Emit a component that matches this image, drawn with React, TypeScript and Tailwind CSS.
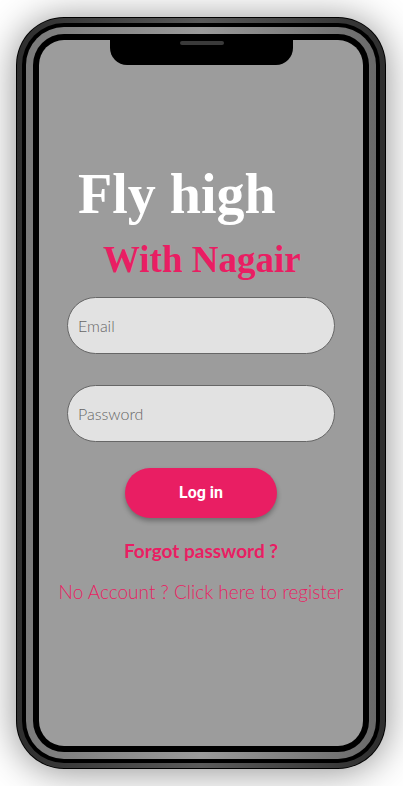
export default function App() {
  return (
    <div className="min-h-[786px] w-[403px] bg-white pl-[16px] pt-[17px]">
      {/* phone frame */}
      <div className="h-[752px] w-[370px] rounded-[48px] bg-black p-px shadow-[0_2px_38px_rgba(0,0,0,0.45)]">
        <div className="h-full w-full rounded-[47px] bg-gradient-to-r from-[#2e2e2e] via-[#5a5a5a] to-[#2e2e2e] p-[5px]">
          <div className="h-full w-full rounded-[42px] bg-black p-[4px]">
            <div className="h-full w-full rounded-[38px] bg-gradient-to-r from-[#7a7a7a] via-[#9a9a9a] to-[#6a6a6a] p-[7px]">
              <div className="h-full w-full rounded-[31px] bg-black p-[6px]">
                <div className="relative h-full w-full overflow-hidden rounded-[25px] bg-[#9c9c9c]">
                  {/* notch */}
                  <div className="absolute left-[71px] top-0 flex h-[25px] w-[183px] justify-center rounded-b-[17px] bg-black">
                    <div className="mt-[1px] h-[4px] w-[44px] rounded-full bg-[#3a3a3a]" />
                  </div>

                  <div className="flex flex-col">
                    <h1 className="ml-[39px] mt-[126px] font-['Liberation_Serif',serif] text-[56px] leading-[56px] font-bold text-white">
                      Fly high
                    </h1>
                    <h2 className="ml-[64px] mt-[19px] font-['Liberation_Serif',serif] text-[37px] leading-[37px] font-bold text-[#e91e63]">
                      With Nagair
                    </h2>

                    <div className="mt-[19px] flex flex-col items-center gap-[31px]">
                      <input
                        type="text"
                        placeholder="Email"
                        className="h-[57px] w-[268px] rounded-full border border-[#666] bg-[#e2e2e2] pl-[10px] font-['Lato',sans-serif] text-[16px] font-light text-[#555] outline-none placeholder:text-[#666]"
                      />
                      <input
                        type="password"
                        placeholder="Password"
                        className="h-[57px] w-[268px] rounded-full border border-[#666] bg-[#e2e2e2] pl-[10px] font-['Lato',sans-serif] text-[16px] font-light text-[#555] outline-none placeholder:text-[#666]"
                      />
                    </div>

                    <div className="mt-[26px] flex flex-col items-center">
                      <button className="h-[50px] w-[152px] rounded-full bg-[#e91e63] font-['Roboto',sans-serif] text-[16px] font-bold text-white shadow-[0_3px_5px_rgba(0,0,0,0.3)]">
                        Log in
                      </button>
                      <p className="mt-[21px] font-['Lato',sans-serif] text-[19px] leading-[24px] font-bold text-[#e91e63]">
                        Forgot password ?
                      </p>
                      <p className="mt-[16px] font-['Lato',sans-serif] text-[19px] leading-[26px] font-light text-[#e91e63]">
                        No Account ? Click here to register
                      </p>
                    </div>
                  </div>
                </div>
              </div>
            </div>
          </div>
        </div>
      </div>
    </div>
  );
}
